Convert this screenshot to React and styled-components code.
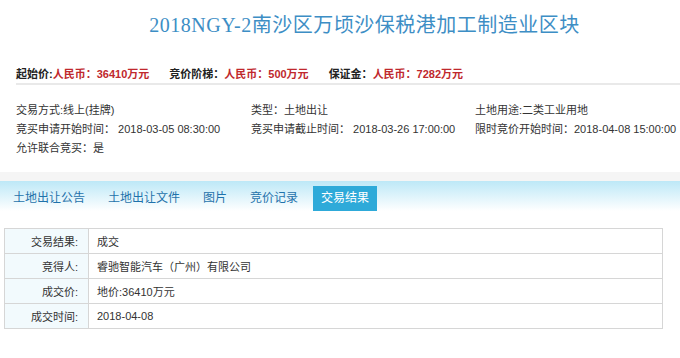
import React from 'react';
import styled, { createGlobalStyle } from 'styled-components';

const GlobalStyle = createGlobalStyle`
  html, body {
    margin: 0;
    padding: 0;
    background: #fff;
  }
  body {
    font-family: "Liberation Sans", "Noto Sans CJK SC", sans-serif;
    color: #333;
  }
`;

const Page = styled.div`
  width: 680px;
  height: 358px;
  overflow: hidden;
  background: #fff;
`;

const Title = styled.h1`
  margin: 0;
  padding: 12px 0 0 49px;
  text-align: center;
  font-family: "Liberation Serif", "Noto Sans CJK SC", serif;
  font-weight: normal;
  font-size: 20px;
  letter-spacing: 0.5px;
  line-height: 26px;
  color: #3d8ec5;
`;

const PriceBar = styled.div`
  display: flex;
  align-items: center;
  gap: 20px;
  margin: 24px 0 0 16px;
  height: 21px;
  border-bottom: 2px solid #e9e9e9;
  font-size: 11px;
  font-weight: bold;
  color: #222;
`;

const PriceItem = styled.div`
  white-space: nowrap;
`;

const Red = styled.span`
  color: #c0282d;
`;

const InfoGrid = styled.div`
  display: grid;
  grid-template-columns: 235px 224px 1fr;
  grid-auto-rows: 19px;
  padding: 16px 0 14px 16px;
  font-size: 11px;
  line-height: 19px;
  color: #333;
`;

const InfoCell = styled.div`
  white-space: nowrap;
`;

const Band = styled.div`
  height: 9px;
  background: #f5f5f5;
`;

const TabBar = styled.div`
  display: flex;
  align-items: flex-end;
  gap: 7px;
  height: 30px;
  padding-left: 5px;
  background: linear-gradient(#bde8f7, #ffffff);
`;

const Tab = styled.div`
  height: 25px;
  line-height: 25px;
  padding: 0 8px;
  font-size: 12px;
  white-space: nowrap;
  color: ${props => (props.active ? '#fff' : '#1f72ab')};
  background: ${props => (props.active ? '#2eaad9' : 'transparent')};
`;

const Table = styled.table`
  margin: 17px 0 0 4px;
  width: 659px;
  border-collapse: collapse;
  font-size: 11px;
  color: #333;
`;

const LabelCell = styled.td`
  width: 73px;
  height: 24px;
  padding: 0 10px 0 0;
  text-align: right;
  background: #f2fafd;
  border: 1px solid #d6d6d6;
`;

const ValueCell = styled.td`
  height: 24px;
  padding: 0 0 0 8px;
  border: 1px solid #d6d6d6;
`;

const info = [
  ['交易方式:线上(挂牌)', '类型：土地出让', '土地用途:二类工业用地'],
  ['竞买申请开始时间： 2018-03-05 08:30:00', '竞买申请截止时间： 2018-03-26 17:00:00', '限时竞价开始时间：2018-04-08 15:00:00'],
  ['允许联合竞买：是'],
];

const tabs = ['土地出让公告', '土地出让文件', '图片', '竞价记录', '交易结果'];

const results = [
  ['交易结果:', '成交'],
  ['竞得人:', '睿驰智能汽车（广州）有限公司'],
  ['成交价:', '地价:36410万元'],
  ['成交时间:', '2018-04-08'],
];

export default function App() {
  return (
    <Page>
      <GlobalStyle />
      <Title>2018NGY-2南沙区万顷沙保税港加工制造业区块</Title>

      <PriceBar>
        <PriceItem>起始价:<Red>人民币：36410万元</Red></PriceItem>
        <PriceItem>竞价阶梯：<Red>人民币：500万元</Red></PriceItem>
        <PriceItem>保证金：<Red>人民币：7282万元</Red></PriceItem>
      </PriceBar>

      <InfoGrid>
        {info.map((row, i) =>
          row.map((text, j) => <InfoCell key={i + '-' + j}>{text}</InfoCell>)
        )}
      </InfoGrid>

      <Band />
      <TabBar>
        {tabs.map(t => (
          <Tab key={t} active={t === '交易结果'}>{t}</Tab>
        ))}
      </TabBar>

      <Table>
        <tbody>
          {results.map(([label, value]) => (
            <tr key={label}>
              <LabelCell>{label}</LabelCell>
              <ValueCell>{value}</ValueCell>
            </tr>
          ))}
        </tbody>
      </Table>
    </Page>
  );
}
